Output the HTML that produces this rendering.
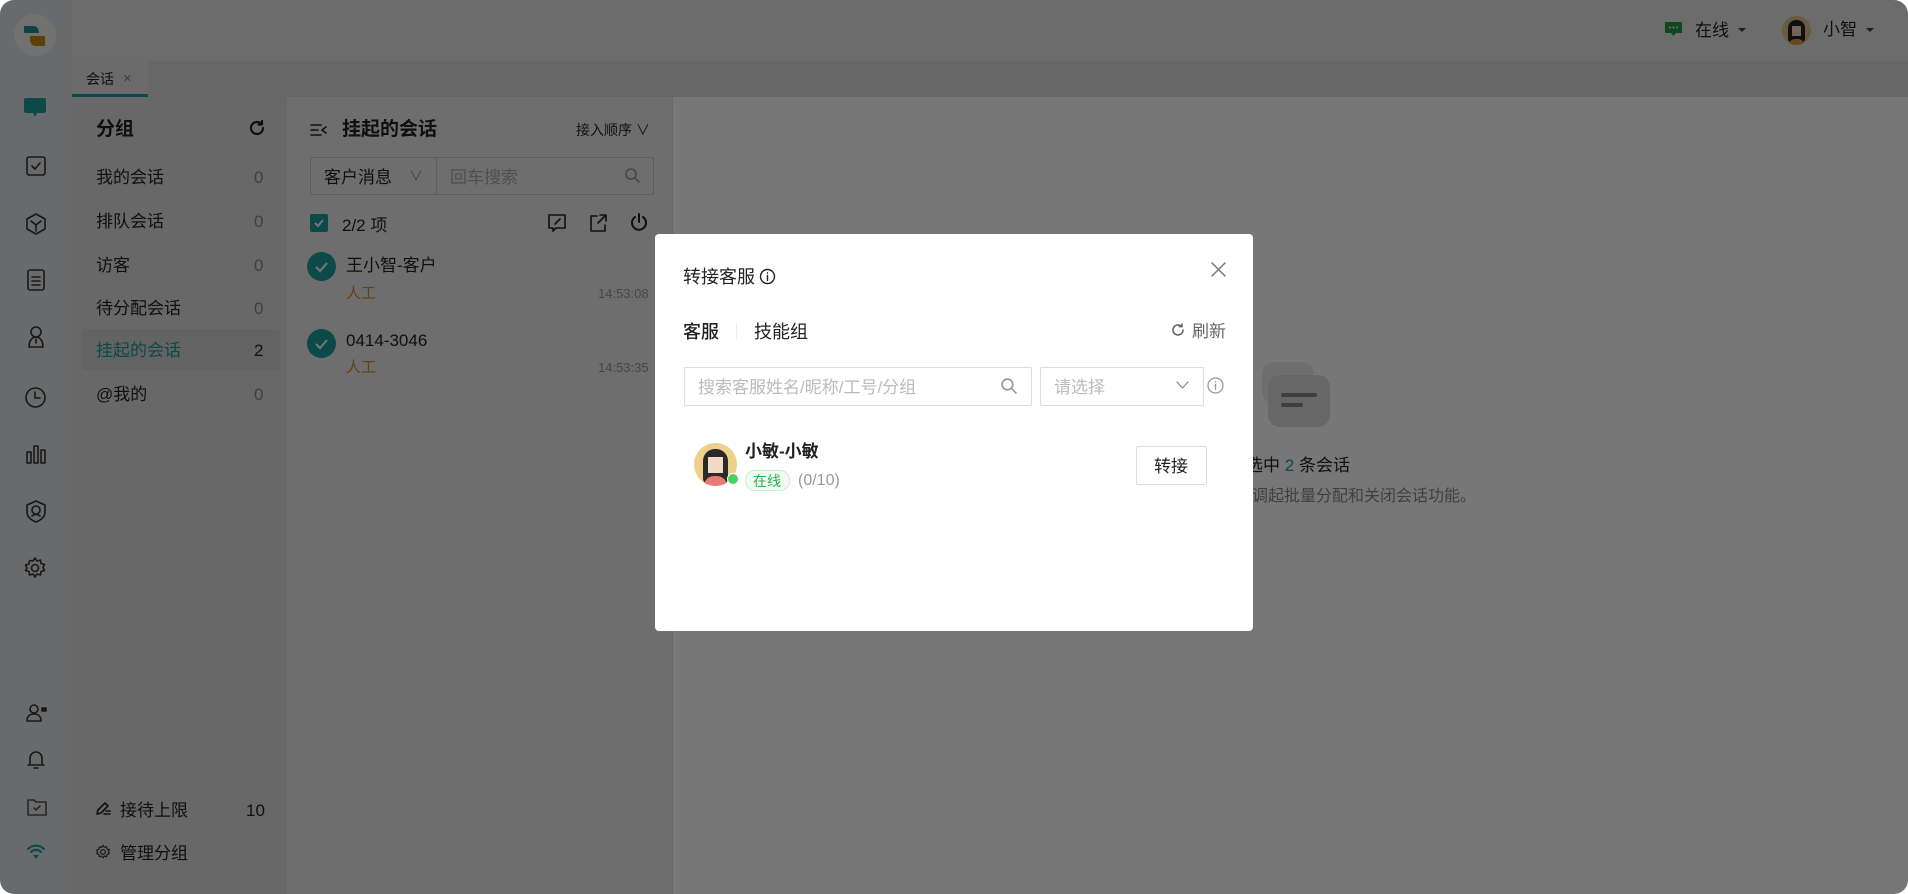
<!DOCTYPE html>
<html><head><meta charset="utf-8"><style>
*{margin:0;padding:0;box-sizing:border-box}
body{width:1908px;height:894px;overflow:hidden;background:#fff;font-family:"Liberation Sans","Noto Sans CJK SC",sans-serif;color:#222;position:relative}
.a{position:absolute}
.root{position:absolute;left:0;top:0;width:1908px;height:894px;border-radius:14px;overflow:hidden;background:#fff}
.t{position:absolute;white-space:nowrap;font-size:17px;line-height:1;margin-top:1px}
.ov{position:absolute;left:0;top:0;width:1908px;height:894px;background:rgba(0,0,0,0.535)}
.ic{position:absolute;fill:none;stroke:#333;stroke-width:1.6;stroke-linecap:round;stroke-linejoin:round}
</style></head><body>
<div class="root">
 <div class="a" style="left:0;top:0;width:1908px;height:61px;background:#e8e8e8"></div>
 <div class="a" style="left:72px;top:61px;width:1836px;height:36px;background:#dcdcdc"></div>
 <div class="a" style="left:72px;top:61px;width:76px;height:36px;background:#e6e6e6;border-bottom:3px solid #1b9c9c"></div>
 <div class="t" style="left:86px;top:71px;font-size:14px">会话</div>
 <div class="t" style="left:123px;top:70px;font-size:15px;color:#888">×</div>
 <div class="a" style="left:0;top:0;width:72px;height:894px;background:#e2e4e6"></div>
 <div class="a" style="left:14px;top:14px;width:42px;height:42px;border-radius:50%;background:#f3f3f3"></div>
 <svg class="a" style="left:22px;top:24px" width="26" height="24" viewBox="0 0 26 24"><path d="M2 2h9c4 0 6 3 6 7H2z" fill="#1b8f8f"/><path d="M8 12h15v10h-9c-4 0-6-3-6-7z" fill="#c48a14"/></svg>
 <svg class="a" style="left:23px;top:97px" width="24" height="22" viewBox="0 0 24 22"><path d="M3 1h18a2 2 0 0 1 2 2v11a2 2 0 0 1-2 2h-7l-2 4-2-4H3a2 2 0 0 1-2-2V3a2 2 0 0 1 2-2z" fill="#1b9c9c"/></svg>
 <svg class="ic" style="left:25px;top:155px" width="22" height="22" viewBox="0 0 22 22"><rect x="2" y="2" width="18" height="18" rx="2"/><path d="M7 11l3 3 5-6"/></svg>
 <svg class="ic" style="left:24px;top:212px" width="24" height="24" viewBox="0 0 24 24"><path d="M12 2l9 5v10l-9 5-9-5V7z"/><path d="M7 9l5 4 5-4M12 13v6"/></svg>
 <svg class="ic" style="left:26px;top:268px" width="20" height="24" viewBox="0 0 20 24"><rect x="2" y="2" width="16" height="20" rx="2"/><path d="M6 9h8M6 13h8M6 17h8"/></svg>
 <svg class="ic" style="left:25px;top:325px" width="22" height="26" viewBox="0 0 22 26"><circle cx="11" cy="7" r="5"/><path d="M4 22c0-6 3-10 7-10s7 4 7 10zM11 14v4"/></svg>
 <svg class="ic" style="left:24px;top:386px" width="23" height="23" viewBox="0 0 23 23"><circle cx="11.5" cy="11.5" r="9.5"/><path d="M11 6v6h5"/></svg>
 <svg class="ic" style="left:25px;top:443px" width="22" height="22" viewBox="0 0 22 22"><rect x="2" y="9" width="4" height="11"/><rect x="9" y="3" width="4" height="17"/><rect x="16" y="7" width="4" height="13"/></svg>
 <svg class="ic" style="left:24px;top:499px" width="24" height="24" viewBox="0 0 24 24"><path d="M12 2l9 4v7c0 5-4 8-9 10-5-2-9-5-9-10V6z"/><circle cx="12" cy="11" r="4"/><path d="M8 17c2-2 6-2 8 0"/></svg>
 <svg class="ic" style="left:23px;top:556px" width="24" height="24" viewBox="0 0 24 24"><circle cx="12" cy="12" r="3.5"/><path d="M12 2l2 3 3.5-1 .5 3.5 3.5 1-1.5 3 1.5 3-3.5 1-.5 3.5-3.5-1-2 3-2-3-3.5 1-.5-3.5-3.5-1L4 12 2.5 9 6 8l.5-3.5L10 5z"/></svg>
 <svg class="ic" style="left:26px;top:703px" width="22" height="20" viewBox="0 0 22 20"><circle cx="8" cy="6" r="4"/><path d="M1 18c0-5 3-7 7-7s7 2 7 7z"/><rect x="16" y="5" width="4" height="3" fill="#333"/></svg>
 <svg class="ic" style="left:27px;top:750px" width="18" height="20" viewBox="0 0 18 20"><path d="M3 15V8a6 6 0 0 1 12 0v7M1 15h16M7 18h4"/></svg>
 <svg class="ic" style="left:27px;top:798px;stroke:#555" width="20" height="18" viewBox="0 0 20 18"><path d="M1 2h6l2 2h10v13H1z"/><path d="M7 10l2 2 4-4"/></svg>
 <svg class="a" style="left:26px;top:844px" width="20" height="16" viewBox="0 0 20 16"><path d="M2 5a11 11 0 0 1 16 0M5 8a7 7 0 0 1 10 0" fill="none" stroke="#1b9c9c" stroke-width="2.2" stroke-linecap="round"/><path d="M7 11h6l-3 4z" fill="#1b9c9c"/></svg>
 <div class="a" style="left:72px;top:97px;width:215px;height:797px;background:#dedede"></div>
 <div class="t" style="left:96px;top:119px;font-size:19px;font-weight:bold">分组</div>
 <svg class="ic" style="left:248px;top:119px;stroke-width:2.2;stroke:#222" width="18" height="18" viewBox="0 0 18 18"><path d="M15 9a6 6 0 1 1-2-4.5"/><path d="M14 2v3.5h-3.5"/></svg>
 <div class="a" style="left:82px;top:329px;width:198px;height:41px;background:#d4d4d4;border-radius:4px"></div>
 <div class="t" style="left:96px;top:168px">我的会话</div><div class="t" style="left:254px;top:168px;color:#888">0</div>
 <div class="t" style="left:96px;top:212px">排队会话</div><div class="t" style="left:254px;top:212px;color:#888">0</div>
 <div class="t" style="left:96px;top:256px">访客</div><div class="t" style="left:254px;top:256px;color:#888">0</div>
 <div class="t" style="left:96px;top:299px">待分配会话</div><div class="t" style="left:254px;top:299px;color:#888">0</div>
 <div class="t" style="left:96px;top:341px;color:#1b9c9c">挂起的会话</div><div class="t" style="left:254px;top:341px">2</div>
 <div class="t" style="left:96px;top:385px">@我的</div><div class="t" style="left:254px;top:385px;color:#888">0</div>
 <svg class="ic" style="left:95px;top:801px;stroke:#222" width="16" height="15" viewBox="0 0 16 15"><path d="M2 13l1-4 7-7 3 3-7 7zM9 13h6M11 10h4"/></svg>
 <div class="t" style="left:120px;top:801px">接待上限</div><div class="t" style="left:246px;top:801px">10</div>
 <svg class="ic" style="left:95px;top:844px;stroke:#222" width="16" height="16" viewBox="0 0 24 24"><circle cx="12" cy="12" r="3.5"/><path d="M12 2l2 3 3.5-1 .5 3.5 3.5 1-1.5 3 1.5 3-3.5 1-.5 3.5-3.5-1-2 3-2-3-3.5 1-.5-3.5-3.5-1L4 12 2.5 9 6 8l.5-3.5L10 5z"/></svg>
 <div class="t" style="left:120px;top:844px">管理分组</div>
 <div class="a" style="left:287px;top:97px;width:386px;height:797px;background:#ececec;border-right:1px solid #ddd"></div>
 <svg class="ic" style="left:310px;top:122px;stroke:#222" width="18" height="16" viewBox="0 0 18 16"><path d="M1 3h10M1 8h7M1 13h10M16 5l-4 3 4 3"/></svg>
 <div class="t" style="left:342px;top:119px;font-size:19px;font-weight:bold">挂起的会话</div>
 <div class="t" style="left:576px;top:122px;font-size:14px">接入顺序 ∨</div>
 <div class="a" style="left:310px;top:157px;width:344px;height:38px;border:1px solid #c8c8c8;background:#ececec"></div>
 <div class="a" style="left:436px;top:158px;width:1px;height:36px;background:#c8c8c8"></div>
 <div class="t" style="left:324px;top:168px">客户消息</div><div class="t" style="left:409px;top:168px;color:#999;font-size:14px">∨</div>
 <div class="t" style="left:450px;top:168px;color:#aaa">回车搜索</div>
 <svg class="ic" style="left:624px;top:167px;stroke:#999" width="16" height="16" viewBox="0 0 16 16"><circle cx="7" cy="7" r="5"/><path d="M11 11l4 4"/></svg>
 <div class="a" style="left:310px;top:214px;width:18px;height:18px;background:#1b9c9c;border-radius:2px"></div>
 <svg class="a" style="left:312px;top:216px" width="14" height="14" viewBox="0 0 14 14"><path d="M3 7l3 3 5-6" fill="none" stroke="#fff" stroke-width="2"/></svg>
 <div class="t" style="left:342px;top:216px">2/2 项</div>
 <svg class="ic" style="left:547px;top:213px;stroke:#222" width="20" height="20" viewBox="0 0 20 20"><path d="M2 2h16v13H9l-3 3v-3H2z"/><path d="M8 11l5-5"/></svg>
 <svg class="ic" style="left:588px;top:213px;stroke:#222" width="20" height="20" viewBox="0 0 20 20"><path d="M9 3H3v15h14v-6M12 2h6v6M18 2l-8 8"/></svg>
 <svg class="ic" style="left:629px;top:212px;stroke:#222;stroke-width:2" width="20" height="20" viewBox="0 0 20 20"><path d="M10 2v8M6 5a7 7 0 1 0 8 0"/></svg>
 <div class="a" style="left:307px;top:252px;width:29px;height:29px;border-radius:50%;background:#1b9c9c"></div>
 <svg class="a" style="left:312px;top:257px" width="19" height="19" viewBox="0 0 19 19"><path d="M4 10l4 4 7-8" fill="none" stroke="#fff" stroke-width="2"/></svg>
 <div class="t" style="left:346px;top:256px">王小智-客户</div>
 <div class="t" style="left:346px;top:285px;font-size:15px;color:#d88a26">人工</div>
 <div class="t" style="left:598px;top:286px;font-size:13px;color:#999">14:53:08</div>
 <div class="a" style="left:307px;top:329px;width:29px;height:29px;border-radius:50%;background:#1b9c9c"></div>
 <svg class="a" style="left:312px;top:334px" width="19" height="19" viewBox="0 0 19 19"><path d="M4 10l4 4 7-8" fill="none" stroke="#fff" stroke-width="2"/></svg>
 <div class="t" style="left:346px;top:331px">0414-3046</div>
 <div class="t" style="left:346px;top:359px;font-size:15px;color:#d88a26">人工</div>
 <div class="t" style="left:598px;top:360px;font-size:13px;color:#999">14:53:35</div>
 <div class="a" style="left:1262px;top:362px;width:52px;height:42px;border-radius:12px;background:#ececec"></div>
 <div class="a" style="left:1268px;top:375px;width:62px;height:52px;border-radius:12px;background:#dcdcdc"></div>
 <div class="a" style="left:1281px;top:393px;width:36px;height:4px;border-radius:2px;background:#888"></div>
 <div class="a" style="left:1281px;top:403px;width:22px;height:4px;border-radius:2px;background:#888"></div>
 <div class="t" style="right:558px;top:456px">已选中 <span style="color:#1b9c9c">2</span> 条会话</div>
 <div class="t" style="right:432px;top:488px;color:#888;font-size:16px">可使用右键调起批量分配和关闭会话功能。</div>
 <svg class="a" style="left:1665px;top:22px" width="17" height="16" viewBox="0 0 17 16"><path d="M0 0h17v11H11l-2.5 3L6 11H0z" fill="#1e9a3c"/><circle cx="5" cy="5.5" r="1" fill="#fff"/><circle cx="8.5" cy="5.5" r="1" fill="#fff"/><circle cx="12" cy="5.5" r="1" fill="#fff"/></svg>
 <div class="t" style="left:1695px;top:21px">在线</div>
 <svg class="a" style="left:1737px;top:27px" width="10" height="6"><path d="M1 1h8L5 5z" fill="#444"/></svg>
 <div class="a" style="left:1782px;top:16px;width:29px;height:29px;border-radius:50%;background:#e0c48a;overflow:hidden"><div class="a" style="left:6px;top:4px;width:17px;height:22px;border-radius:8px 8px 3px 3px;background:#222"></div><div class="a" style="left:10px;top:10px;width:9px;height:10px;background:#f3d9c0"></div><div class="a" style="left:7px;top:23px;width:15px;height:8px;border-radius:6px 6px 0 0;background:#e49a3a"></div></div>
 <div class="t" style="left:1823px;top:20px">小智</div>
 <svg class="a" style="left:1865px;top:27px" width="10" height="6"><path d="M1 1h8L5 5z" fill="#444"/></svg>
 <div class="ov"></div>
 <div class="a" style="left:655px;top:234px;width:598px;height:397px;background:#fff;border-radius:4px"></div>
 <div class="t" style="left:683px;top:267px;font-size:18px">转接客服</div>
 <svg class="ic" style="left:759px;top:268px;stroke:#222;stroke-width:1.4" width="17" height="17" viewBox="0 0 17 17"><circle cx="8.5" cy="8.5" r="7"/><path d="M8.5 7.5v5M8.5 4.8v.3"/></svg>
 <svg class="ic" style="left:1211px;top:262px;stroke:#777;stroke-width:1.5" width="15" height="15" viewBox="0 0 15 15"><path d="M1 1l13 13M14 1L1 14"/></svg>
 <div class="t" style="left:683px;top:322px;font-size:18px;font-weight:500">客服</div>
 <div class="a" style="left:736px;top:323px;width:1px;height:17px;background:#eee"></div>
 <div class="t" style="left:754px;top:322px;font-size:18px">技能组</div>
 <svg class="ic" style="left:1171px;top:323px;stroke:#666;stroke-width:1.6" width="14" height="14" viewBox="0 0 14 14"><path d="M12 7a5 5 0 1 1-1.5-3.6"/><path d="M11 1v2.6H8.4"/></svg>
 <div class="t" style="left:1192px;top:322px;font-size:17px;color:#666">刷新</div>
 <div class="a" style="left:684px;top:367px;width:348px;height:39px;border:1px solid #dcdcdc;border-radius:2px"></div>
 <div class="t" style="left:698px;top:378px;color:#bbb">搜索客服姓名/昵称/工号/分组</div>
 <svg class="ic" style="left:1000px;top:377px;stroke:#999" width="17" height="17" viewBox="0 0 16 16"><circle cx="7" cy="7" r="5"/><path d="M11 11l4 4"/></svg>
 <div class="a" style="left:1040px;top:367px;width:164px;height:39px;border:1px solid #dcdcdc;border-radius:2px"></div>
 <div class="t" style="left:1054px;top:378px;color:#bbb">请选择</div>
 <svg class="ic" style="left:1176px;top:381px;stroke:#999;stroke-width:1.3" width="13" height="9" viewBox="0 0 13 9"><path d="M1 1l5.5 6L12 1"/></svg>
 <svg class="ic" style="left:1207px;top:377px;stroke:#999;stroke-width:1.3" width="17" height="17" viewBox="0 0 17 17"><circle cx="8.5" cy="8.5" r="7.5"/><path d="M8.5 7.5v5M8.5 4.8v.3"/></svg>
 <div class="a" style="left:694px;top:443px;width:43px;height:43px;border-radius:50%;background:#ecd08c;overflow:hidden"><div class="a" style="left:9px;top:6px;width:25px;height:34px;border-radius:12px 12px 4px 4px;background:#2a2a2a"></div><div class="a" style="left:14px;top:14px;width:15px;height:16px;background:#f3dac5"></div><div class="a" style="left:10px;top:33px;width:23px;height:12px;border-radius:10px 10px 0 0;background:#e57a78"></div></div>
 <div class="a" style="left:727px;top:473px;width:12px;height:12px;border-radius:50%;background:#4cd264;border:1.5px solid #fff"></div>
 <div class="t" style="left:745px;top:442px;font-weight:bold">小敏-小敏</div>
 <div class="a" style="left:745px;top:470px;width:45px;height:21px;border:1px solid #c6efcd;border-radius:10px;background:#f1fbf2"></div>
 <div class="t" style="left:753px;top:473px;font-size:14px;color:#2bb24c">在线</div>
 <div class="t" style="left:798px;top:472px;font-size:16px;color:#999">(0/10)</div>
 <div class="a" style="left:1136px;top:446px;width:71px;height:39px;border:1px solid #dcdcdc;border-radius:2px"></div>
 <div class="t" style="left:1154px;top:457px">转接</div>
</div>
</body></html>
